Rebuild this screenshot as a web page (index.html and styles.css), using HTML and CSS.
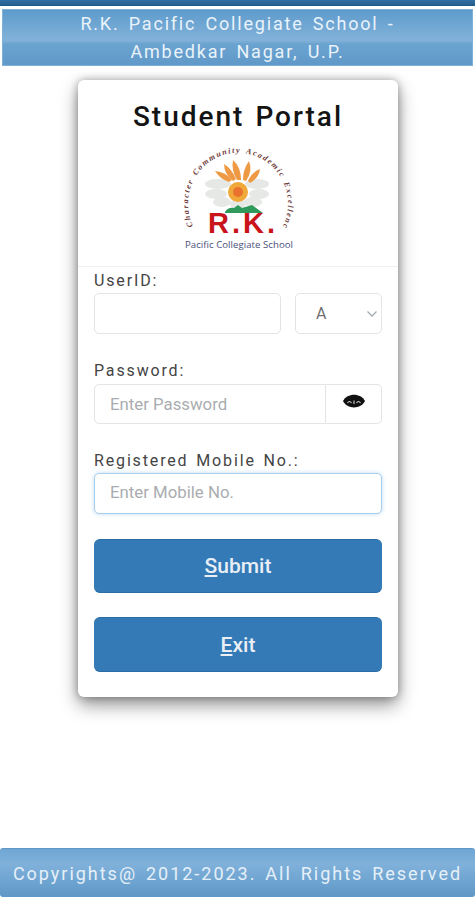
FILE: index.html
```html
<!DOCTYPE html>
<html lang="en">
<head>
<meta charset="utf-8">
<title>Student Portal</title>
<link rel="stylesheet" href="styles.css">
</head>
<body>
<div class="topbar"></div>
<header class="banner">R.K. Pacific Collegiate School -<br>Ambedkar Nagar, U.P.</header>
<main class="card">
  <div class="card-head">
    <h1 class="title">Student Portal</h1>
    <svg class="logo" width="120" height="108" viewBox="0 0 120 108" aria-label="R.K. Pacific Collegiate School logo">
      <defs>
        <path id="arc" d="M15 84 A50 51 0 1 1 105 84"/>
      </defs>
      <g fill="#e6e8e6">
        <ellipse cx="40" cy="42" rx="13" ry="5"/>
        <ellipse cx="38" cy="52" rx="11" ry="5"/>
        <ellipse cx="44" cy="60" rx="9" ry="5"/>
        <ellipse cx="79" cy="42" rx="12" ry="5"/>
        <ellipse cx="81" cy="52" rx="10" ry="5"/>
        <ellipse cx="75" cy="60" rx="9" ry="5"/>
        <ellipse cx="60" cy="62" rx="8" ry="5"/>
      </g>
      <g fill="#ee9a45">
        <path d="M59 38 Q53 28 55 18 Q63 25 63 38Z"/>
        <path d="M55 39 Q46 32 46 22 Q54 27 58 37Z"/>
        <path d="M65 38 Q65 27 71 19 Q75 29 68 39Z"/>
        <path d="M51 40 Q42 37 37 29 Q48 30 54 38Z"/>
        <path d="M70 39 Q74 30 82 27 Q81 36 72 41Z"/>
      </g>
      <circle cx="60" cy="50" r="10" fill="#f0a838"/>
      <circle cx="60" cy="50" r="5" fill="#e8722e"/>
      <path d="M47 70 Q50 65 56 66 L60 63 L64 66 L74 63 L85 71 L47 71Z" fill="#2f9a5b"/>
      <text class="logo-arc"><textPath href="#arc">Character Community Academic Excellence</textPath></text>
      <text class="logo-rk" x="65" y="91" text-anchor="middle">R.K.</text>
      <text class="logo-sub" x="61" y="106" text-anchor="middle">Pacific Collegiate School</text>
    </svg>
  </div>
  <form class="form">
    <label class="label" for="uid">UserID:</label>
    <div class="row">
      <input class="control grow" id="uid" type="text">
      <div class="select">
        <span>A</span>
        <svg width="12" height="8" viewBox="0 0 12 8"><path d="M1.5 1.5 6 6l4.5-4.5" fill="none" stroke="#a6abaf" stroke-width="1.3"/></svg>
      </div>
    </div>
    <label class="label label-pass" for="pw">Password:</label>
    <div class="group">
      <input class="control group-input" id="pw" type="text" placeholder="Enter Password">
      <div class="group-addon">
        <svg width="24" height="14" viewBox="0 0 24 14">
          <path d="M1 7 C5 -1.5 19 -1.5 23 7 C19 15.5 5 15.5 1 7Z" fill="#111"/>
          <path d="M5.5 9 Q7.5 6 9.5 9 M14.5 9 Q16.5 6 18.5 9 M12 6.5V10" fill="none" stroke="#cfcfcf" stroke-width="1.1"/>
        </svg>
      </div>
    </div>
    <label class="label label-mobile" for="mob">Registered Mobile No.:</label>
    <input class="control focused" id="mob" type="text" placeholder="Enter Mobile No.">
    <button class="btn btn-submit" type="button"><u>S</u>ubmit</button>
    <button class="btn btn-exit" type="button"><u>E</u>xit</button>
  </form>
</main>
<footer class="footer">Copyrights@ 2012-2023. All Rights Reserved</footer>
</body>
</html>
```
FILE: styles.css
```css
* { box-sizing: border-box; }
html, body { margin: 0; padding: 0; height: 100%; }
body {
  width: 475px;
  height: 900px;
  background: #fff;
  font-family: Roboto, "Liberation Sans", sans-serif;
  display: flex;
  flex-direction: column;
  overflow: hidden;
}
.topbar {
  height: 6px;
  flex: none;
  background: linear-gradient(#2f6fa3, #275f90);
  border-bottom: 1px solid #1f5a8c;
}
.banner {
  flex: none;
  margin: 3px 2px 0;
  height: 57px;
  color: #eaf3fa;
  font-size: 18px;
  line-height: 28px;
  letter-spacing: 1.8px;
  word-spacing: 3px;
  text-align: center;
  background: linear-gradient(#5d9bcc 0%, #82b2d9 55%, #6ba3d0 62%, #6099c9 100%);
  border: 1px solid #7fb0d8;
}
.card {
  flex: none;
  width: 320px;
  height: 617px;
  margin: 14px 0 0 78px;
  background: #fff;
  border-radius: 6px;
  box-shadow: 0 8px 18px rgba(0,0,0,.42), 0 0 8px rgba(0,0,0,.3);
}
.card-head {
  height: 187px;
  border-bottom: 1px solid #f0f0f0;
  text-align: center;
}
.title {
  margin: 0;
  padding-top: 20px;
  height: 62px;
  font-size: 28px;
  line-height: 34px;
  font-weight: 500;
  letter-spacing: 2px;
  word-spacing: 2px;
  color: #141414;
}
.logo { display: block; margin-left: 100px; overflow: visible; }
.logo-arc { font: italic 600 8px "Liberation Serif", serif; fill: #6e3a3a; letter-spacing: 1.55px; word-spacing: 1.5px; }
.logo-rk { font: 700 29px "Liberation Sans", sans-serif; fill: #c8141a; letter-spacing: 3px; }
.logo-sub { font: 500 9.6px "Open Sans", sans-serif; fill: #4a4f7c; letter-spacing: .05px; }
.form { padding: 0 16px; display: flex; flex-direction: column; }
.label {
  display: block;
  height: 24px;
  padding-top: 4px;
  font-size: 16px;
  line-height: 19px;
  letter-spacing: 1.85px;
  word-spacing: 2px;
  color: #444;
}
.row { display: flex; justify-content: space-between; height: 41px; margin-top: 2px; }
.control {
  display: block;
  width: 100%;
  height: 41px;
  padding: 0 15px;
  border: 1px solid #e2e4e6;
  border-radius: 5px;
  background: #fff;
  font: 16.8px Roboto, sans-serif;
  outline: none;
}
.control::placeholder { color: #aaadb0; opacity: 1; }
.grow { width: 187px; }
.select {
  width: 87px;
  height: 41px;
  border: 1px solid #e2e4e6;
  border-radius: 5px;
  padding: 0 3px 0 20px;
  display: flex;
  align-items: center;
  justify-content: space-between;
  font-size: 16px;
  color: #707070;
}
.label-pass { margin-top: 24px; height: 26px; padding-top: 3px; }
.group { display: flex; height: 41px; }
.group-input { flex: 1; width: auto; min-width: 0; border-radius: 5px 0 0 5px; height: 40px; padding-bottom: 1px; }
.group-addon {
  flex: none;
  width: 56px;
  height: 40px;
  display: flex;
  align-items: center;
  justify-content: center;
  border: 1px solid #e2e4e6;
  border-left: 0;
  border-radius: 0 5px 5px 0;
  padding-bottom: 6px;
}
.label-mobile { margin-top: 7px; height: 39px; padding-top: 21px; line-height: 16px; }
.focused {
  border-color: #a8cfee;
  box-shadow: 0 0 4px rgba(90,160,220,.4);
  margin-top: 2px;
  padding-bottom: 3px;
}
.btn {
  display: block;
  width: 100%;
  border: 0;
  border-radius: 6px;
  background: #337ab7;
  border-top: 1px solid #2b6da6;
  border-bottom: 1px solid #2b6da6;
  color: #e9eff5;
  font: 500 21px Roboto, sans-serif;
  text-align: center;
}
.btn-submit { height: 54px; margin-top: 25px; }
.btn-exit { height: 55px; margin-top: 24px; }
.footer {
  margin-top: auto;
  margin-bottom: 3px;
  height: 49px;
  flex: none;
  display: flex;
  align-items: center;
  justify-content: center;
  color: #e6f0f8;
  font-size: 18px;
  letter-spacing: 1.98px;
  word-spacing: 2.5px;
  white-space: nowrap;
  border-radius: 3px;
  background: linear-gradient(#6ea6d4 0%, #80b1da 30%, #6fa5d1 65%, #5f97c6 100%);
  border-top: 1px solid #6098c8;
}
```
